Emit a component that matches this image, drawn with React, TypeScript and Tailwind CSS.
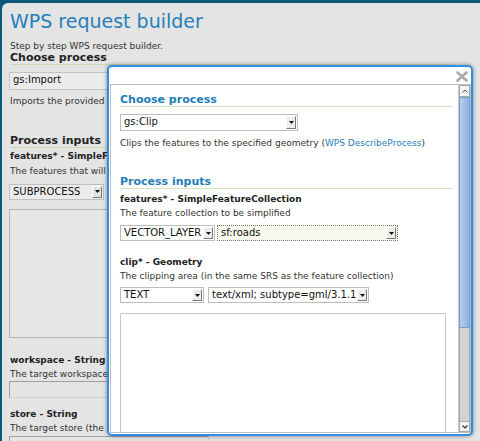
import React from "react";

const Arrow = ({ dim = false }: { dim?: boolean }) => (
  <div
    className={`my-[1px] mr-[1px] w-[10px] flex items-center justify-center border border-t-white border-l-white border-r-[#7a7a7a] border-b-[#7a7a7a] ${
      dim ? "bg-[#e2e2e2]" : "bg-[#ececec]"
    }`}
  >
    <svg width="5" height="3" viewBox="0 0 5 3">
      <path d="M0 0h5L2.5 3z" fill="#111" />
    </svg>
  </div>
);

const Sel = ({
  text,
  cls,
  dim = false,
}: {
  text: string;
  cls: string;
  dim?: boolean;
}) => (
  <div className={`flex border ${cls}`}>
    <div className="flex-1 overflow-hidden whitespace-nowrap pl-[3px] text-[10px] leading-[14px] text-[#111]">
      {text}
    </div>
    <Arrow dim={dim} />
  </div>
);

const LeftPage = () => (
  <div className="h-[438px] rounded-tl-[6px] bg-[#e4e4e4] pl-[8px] pt-[7px] text-[#222]">
    <div className="text-[19px] leading-[22px] text-[#2580bb]">WPS request builder</div>
    <div className="mt-[8px] text-[9px] leading-[12px] text-[#333]">Step by step WPS request builder.</div>
    <div className="mt-[-1px] w-[440px] border-b border-[#c9d9b4] text-[11px] font-bold leading-[13px] text-[#222]">
      Choose process
    </div>
    <Sel text="gs:Import" cls="ml-[-1px] mt-[7px] h-[18px] w-[178px] border-[#c4c4c4] bg-[#ebebeb]" dim />
    <div className="mt-[5px] w-[97px] overflow-hidden whitespace-nowrap text-[9px] leading-[12px] text-[#333]">
      Imports the provided features into GeoServer
    </div>
    <div className="mt-[26.5px] w-[440px] border-b border-[#c9d9b4] text-[11px] font-bold leading-[13px] text-[#222]">
      Process inputs
    </div>
    <div className="mt-[2.5px] w-[97px] overflow-hidden whitespace-nowrap text-[9px] font-bold leading-[12px] text-[#222]">
      features* - SimpleFeatureCollection
    </div>
    <div className="mt-[2.7px] w-[97px] overflow-hidden whitespace-nowrap text-[9px] leading-[12px] text-[#333]">
      The features that will be imported
    </div>
    <Sel text="SUBPROCESS" cls="ml-[-1px] mt-[7px] h-[16px] w-[95px] border-[#c0c0c0] bg-[#ebebeb]" dim />
    <div className="ml-[-1px] mt-[9px] h-[129px] w-[326px] border border-[#b4b4b4] bg-[#e6e6e6]" />
    <div className="mt-[16px] w-[97px] overflow-hidden whitespace-nowrap text-[9px] font-bold leading-[12px] text-[#222]">
      workspace - String
    </div>
    <div className="mt-[2px] w-[97px] overflow-hidden whitespace-nowrap text-[9px] leading-[12px] text-[#333]">
      The target workspace (the default one will be used if omitted)
    </div>
    <div className="ml-[-1px] mt-[1px] h-[17px] w-[200px] border border-[#a0a0a0] border-b-[#d0d0d0] border-r-[#d0d0d0] bg-[#e4e4e4]" />
    <div className="mt-[10px] text-[9px] font-bold leading-[12px] text-[#222]">store - String</div>
    <div className="mt-[2px] w-[97px] overflow-hidden whitespace-nowrap text-[9px] leading-[12px] text-[#333]">
      The target store (the default one will be used)
    </div>
    <div className="ml-[-1px] mt-[2px] h-[17px] w-[200px] border border-[#a0a0a0] border-b-[#d0d0d0] border-r-[#d0d0d0] bg-[#e4e4e4]" />
  </div>
);

const ScrollBar = () => (
  <div className="flex w-[12px] flex-col border-l border-[#c8c8c8] bg-[#e8e8e8]">
    <div className="flex h-[12px] items-center justify-center border border-[#a8a8a8] bg-[#f4f4f4]">
      <svg width="6" height="4" viewBox="0 0 6 4">
        <path d="M0.5 3.5L3 1L5.5 3.5" stroke="#555" strokeWidth="1" fill="none" />
      </svg>
    </div>
    <div className="h-[231px] border border-[#7c9dcc] bg-gradient-to-r from-[#b6cdee] to-[#8fb2e0]" />
    <div className="flex-1 border-x border-[#a8a8a8] bg-[#d2d2d2]" />
    <div className="flex h-[11px] items-center justify-center border border-[#a8a8a8] bg-[#f4f4f4]">
      <svg width="6" height="4" viewBox="0 0 6 4">
        <path d="M0.5 0.5L3 3L5.5 0.5" stroke="#333" strokeWidth="1.2" fill="none" />
      </svg>
    </div>
  </div>
);

const Modal = () => (
  <div className="absolute left-[107px] top-[65px] flex h-[371px] w-[366px] flex-col rounded-[5px] border-2 border-[#2f8ee6] bg-white shadow-[0_0_4px_rgba(0,0,0,0.45)]">
    <div className="flex h-[17px] items-start justify-end pr-[3px] pt-[4px]">
      <svg width="12" height="11" viewBox="0 0 12 11">
        <path d="M1.5 1.5L10.5 9.5M10.5 1.5L1.5 9.5" stroke="#a9a9a9" strokeWidth="2.6" strokeLinecap="round" />
      </svg>
    </div>
    <div className="ml-[1px] flex h-[349px] overflow-hidden border border-[#bdbdbd]">
      <div className="flex-1 overflow-hidden pl-[9px] pt-[8px] text-[#222]">
        <div className="mr-[5px] border-b border-[#d4e6bf] text-[11px] font-bold leading-[13px] text-[#1f7db7]">
          Choose process
        </div>
        <Sel text="gs:Clip" cls="mt-[7px] h-[17px] w-[178px] border-[#bdbdbd] bg-white" />
        <div className="mt-[6px] whitespace-nowrap text-[9px] leading-[12px] text-[#333]">
          Clips the features to the specified geometry (
          <span className="text-[#2a7dbb]">WPS DescribeProcess</span>)
        </div>
        <div className="mr-[5px] mt-[26px] border-b border-[#d4e6bf] text-[11px] font-bold leading-[13px] text-[#1f7db7]">
          Process inputs
        </div>
        <div className="mt-[4px] text-[9px] font-bold leading-[12px] text-[#222]">
          features* - SimpleFeatureCollection
        </div>
        <div className="mt-[2px] text-[9px] leading-[12px] text-[#333]">
          The feature collection to be simplified
        </div>
        <div className="mt-[6px] flex gap-[2px]">
          <Sel text="VECTOR_LAYER" cls="h-[16px] w-[95px] border-[#bdbdbd] bg-white" />
          <Sel text="sf:roads" cls="h-[16px] w-[181px] border-dotted border-[#777] bg-[#f8f8ee]" />
        </div>
        <div className="mt-[15px] text-[9px] font-bold leading-[12px] text-[#222]">clip* - Geometry</div>
        <div className="mt-[2px] whitespace-nowrap text-[9px] leading-[12px] text-[#333]">
          The clipping area (in the same SRS as the feature collection)
        </div>
        <div className="mt-[5px] flex gap-[4px]">
          <Sel text="TEXT" cls="h-[16px] w-[84px] border-[#bdbdbd] bg-white" />
          <Sel text="text/xml; subtype=gml/3.1.1" cls="h-[16px] w-[161px] border-[#bdbdbd] bg-white" />
        </div>
        <div className="relative mt-[10px] h-[130px] w-[326px] border border-[#c8c8c8] bg-white">
          <div className="absolute bottom-[3px] right-[2px] h-[2px] w-[2px] bg-[#bbb]" />
        </div>
      </div>
      <ScrollBar />
    </div>
  </div>
);

export default function App() {
  return (
    <div className="relative h-[441px] w-[480px] overflow-hidden bg-[#0d5878] pl-[2px] pt-[3px] font-['DejaVu_Sans',sans-serif]">
      <LeftPage />
      <Modal />
    </div>
  );
}
